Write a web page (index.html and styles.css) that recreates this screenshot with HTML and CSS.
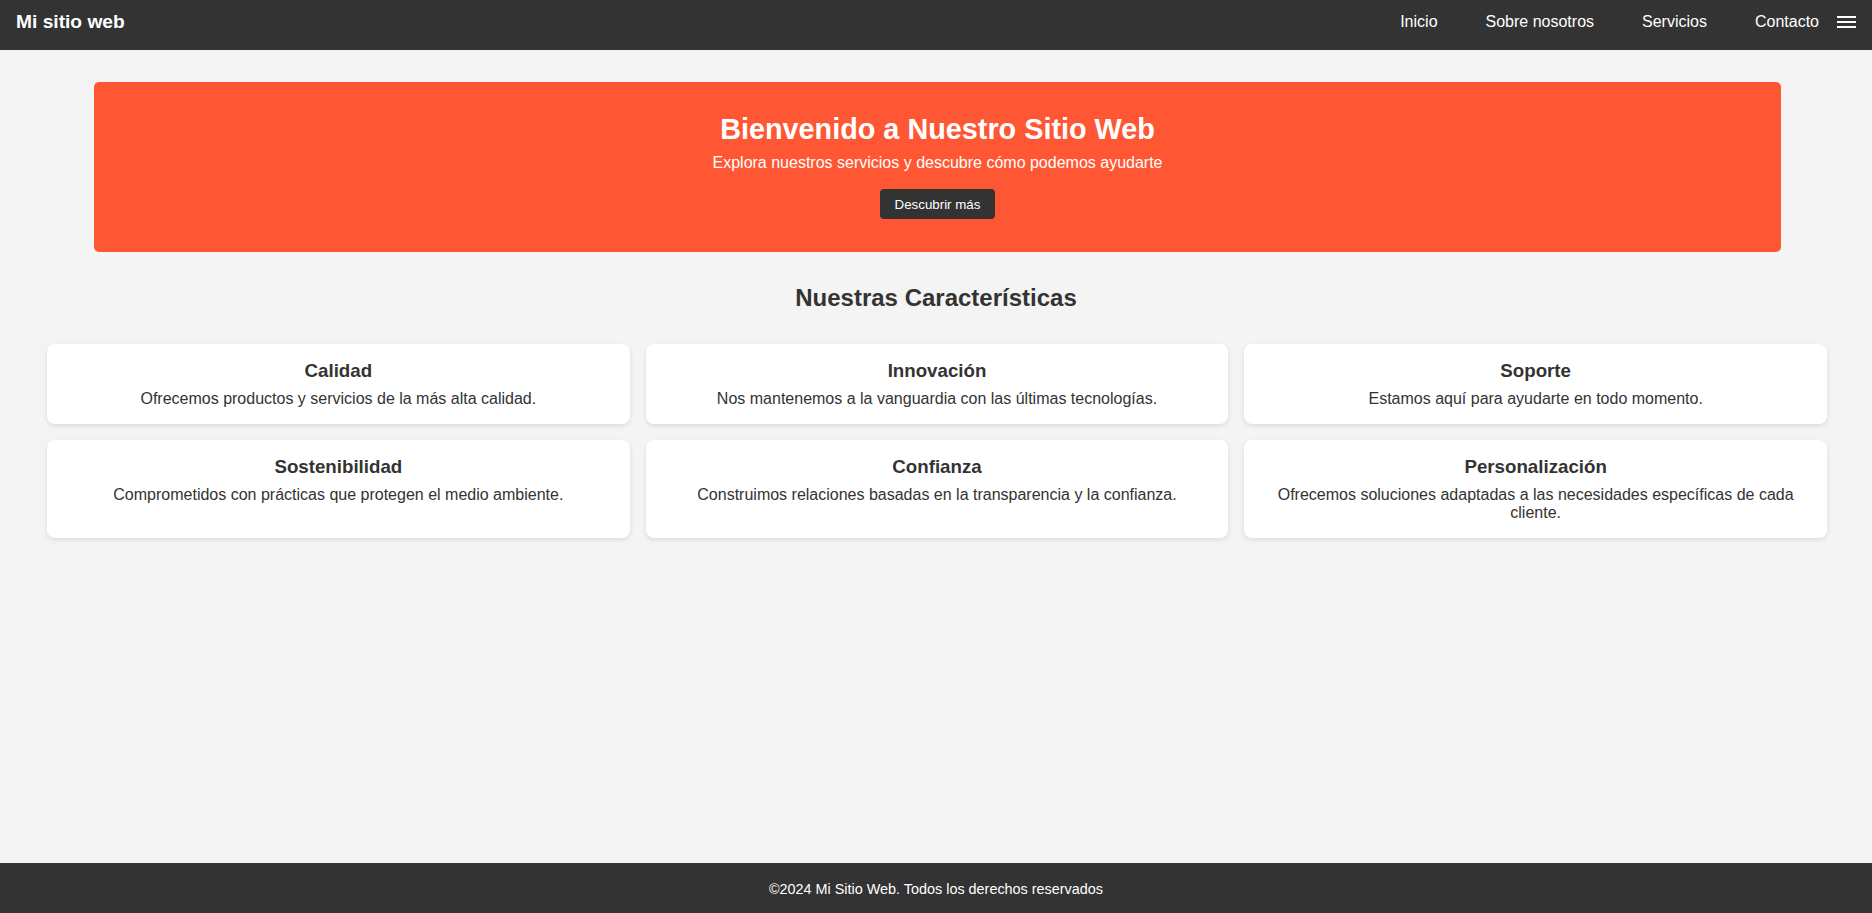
FILE: index.html
```html
<!DOCTYPE html>
<html lang="es">
<head>
<meta charset="utf-8">
<title>Mi sitio web</title>
<link rel="stylesheet" href="styles.css">
</head>
<body>
<header class="topbar">
  <div class="logo">Mi sitio web</div>
  <nav class="nav">
    <a href="#">Inicio</a>
    <a href="#">Sobre nosotros</a>
    <a href="#">Servicios</a>
    <a href="#">Contacto</a>
  </nav>
  <svg class="burger" width="19" height="12" viewBox="0 0 19 12" aria-hidden="true">
    <rect x="0" y="0" width="19" height="2" fill="#fff"/>
    <rect x="0" y="5" width="19" height="2" fill="#fff"/>
    <rect x="0" y="10" width="19" height="2" fill="#fff"/>
  </svg>
</header>
<main class="main">
  <section class="hero">
    <h1 class="hero-title">Bienvenido a Nuestro Sitio Web</h1>
    <p class="hero-sub">Explora nuestros servicios y descubre cómo podemos ayudarte</p>
    <button class="hero-btn">Descubrir más</button>
  </section>
  <h2 class="section-title">Nuestras Características</h2>
  <div class="grid">
    <div class="card"><h3>Calidad</h3><p>Ofrecemos productos y servicios de la más alta calidad.</p></div>
    <div class="card"><h3>Innovación</h3><p>Nos mantenemos a la vanguardia con las últimas tecnologías.</p></div>
    <div class="card"><h3>Soporte</h3><p>Estamos aquí para ayudarte en todo momento.</p></div>
    <div class="card"><h3>Sostenibilidad</h3><p>Comprometidos con prácticas que protegen el medio ambiente.</p></div>
    <div class="card"><h3>Confianza</h3><p>Construimos relaciones basadas en la transparencia y la confianza.</p></div>
    <div class="card"><h3>Personalización</h3><p>Ofrecemos soluciones adaptadas a las necesidades específicas de cada cliente.</p></div>
  </div>
</main>
<footer class="footer">©2024 Mi Sitio Web. Todos los derechos reservados</footer>
</body>
</html>
```
FILE: styles.css
```css
* { box-sizing: border-box; }
html, body { margin: 0; padding: 0; }
body {
  font-family: "Liberation Sans", Arial, sans-serif;
  background: #f4f4f4;
  color: #333;
  min-height: 100vh;
  display: flex;
  flex-direction: column;
}
.topbar {
  height: 50px;
  background: #333;
  color: #fff;
  display: flex;
  align-items: center;
  padding: 0 16px 6px 16px;
}
.logo {
  font-size: 19.2px;
  font-weight: bold;
  flex: 1;
}
.nav {
  display: flex;
  gap: 48px;
}
.nav a {
  color: #fff;
  text-decoration: none;
  font-size: 16px;
}
.burger {
  margin-left: 18px;
  display: block;
}
.main {
  flex: 1;
  padding-top: 32px;
}
.hero {
  background: #ff5733;
  color: #fff;
  border-radius: 5px;
  margin: 0 91px 0 94px;
  padding: 31px 20px 33px;
  text-align: center;
}
.hero-title {
  margin: 0 0 8px;
  font-size: 28.8px;
  font-weight: bold;
}
.hero-sub {
  margin: 0 0 17px;
  font-size: 16px;
}
.hero-btn {
  font-family: "Liberation Sans", Arial, sans-serif;
  font-size: 13.33px;
  line-height: 15px;
  padding: 7.5px 15px;
  background: #333;
  color: #fff;
  border: none;
  border-radius: 4px;
}
.section-title {
  text-align: center;
  font-size: 24px;
  margin: 32px 0;
  color: #333;
}
.grid {
  display: grid;
  grid-template-columns: repeat(3, 1fr);
  gap: 16px;
  margin: 0 45px 0 47px;
}
.card {
  background: #fff;
  border-radius: 8px;
  box-shadow: 0 2px 5px rgba(0, 0, 0, 0.1);
  padding: 16px 20px;
  text-align: center;
}
.card h3 {
  margin: 0 0 8px;
  font-size: 18.72px;
}
.card p {
  margin: 0;
  font-size: 16px;
}
.footer {
  background: #333;
  color: #fff;
  text-align: center;
  font-size: 14.4px;
  height: 50px;
  display: flex;
  align-items: center;
  justify-content: center;
  padding-top: 1px;
}
```
